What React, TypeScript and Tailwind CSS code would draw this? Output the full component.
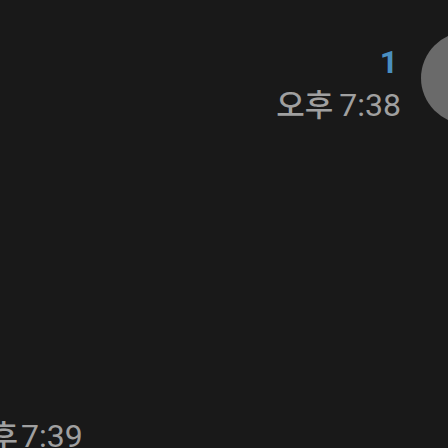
export default function App() {
  return (
    <div className="flex h-[448px] w-[448px] flex-col overflow-hidden bg-[#191919] font-['Roboto','Noto_Sans_CJK_KR',sans-serif] text-[#a0a0a0]">
      <div className="flex justify-end pt-[44px]">
        <div className="flex shrink-0 flex-col items-end">
          <div className="mr-[3px] text-[32px] leading-[36px] font-bold text-[#4a8fc0]">1</div>
          <div className="mt-[5px] flex items-baseline gap-[6px] leading-[40px] whitespace-nowrap">
            <span className="text-[31px] font-medium">오후</span>
            <span className="text-[32px]">7:38</span>
          </div>
        </div>
        <div className="mt-[-12px] mr-[-65px] ml-[20px] h-[92px] w-[92px] shrink-0 rounded-full bg-[#6a6a6a]" />
      </div>
      <div className="mt-auto mb-[-9px] ml-[-39px] flex shrink-0 items-baseline gap-[3px] leading-[40px] whitespace-nowrap">
        <span className="text-[31px] font-medium">오후</span>
        <span className="text-[32px]">7:39</span>
      </div>
    </div>
  );
}
